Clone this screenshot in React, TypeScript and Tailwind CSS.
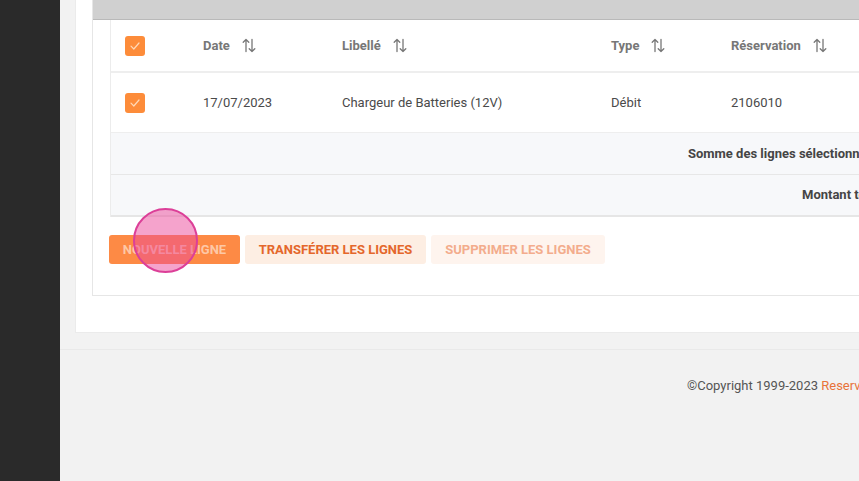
import React from 'react';

const SortIcon = () => (
  <svg width="14" height="15" viewBox="0 0 14 15" fill="none" stroke="#777" strokeWidth="1.3" strokeLinecap="round" strokeLinejoin="round" className="ml-[12px] shrink-0">
    <path d="M4 13.5V1.5M1.2 4.3L4 1.5L6.8 4.3" />
    <path d="M10 1.5V13.5M7.2 10.7L10 13.5L12.8 10.7" />
  </svg>
);

const Checkbox = () => (
  <div className="w-[20px] h-[20px] rounded-[3px] bg-[#fd8c3a] flex items-center justify-center">
    <svg width="10" height="8" viewBox="0 0 10 8" fill="none" stroke="#ffd9b8" strokeWidth="1.2" strokeLinecap="round" strokeLinejoin="round">
      <path d="M1 4.2L3.8 7L9 1" />
    </svg>
  </div>
);

const columns = [
  { label: 'Date', w: 'w-[139px]' },
  { label: 'Libellé', w: 'w-[269px]' },
  { label: 'Type', w: 'w-[120px]' },
  { label: 'Réservation', w: 'w-[200px]' },
];

const row = ['17/07/2023', 'Chargeur de Batteries (12V)', 'Débit', '2106010'];

export default function App() {
  return (
    <div className="flex h-[481px] w-full overflow-hidden bg-[#f2f2f2] text-[13px]" style={{ fontFamily: 'Roboto, "Liberation Sans", sans-serif' }}>
      <div className="w-[60px] shrink-0 bg-[#2a2a2a]" />
      <div className="relative flex-1 min-w-0 flex flex-col">
        {/* Card */}
        <div className="pl-[15px]">
          <div className="w-[1100px] bg-white border-l border-b border-[#ebebeb] pl-[16px] pb-[36px]">
            <div className="border-l border-b border-[#e6e6e6]">
              <div className="h-[20px] bg-[#d0d0d0] border-b border-[#b9b9b9]" />
              <div className="pl-[18px] pb-[31px]">
                {/* Table */}
                <div className="-ml-[1px] border-l border-[#ececec]">
                  <div className="h-[53px] flex items-center border-b-2 border-[#eeeeee]">
                    <div className="w-[77px] pl-[14px] shrink-0"><Checkbox /></div>
                    {columns.map((c) => (
                      <div key={c.label} className={`${c.w} shrink-0 pl-[15px] flex items-center font-bold text-[#777]`}>
                        <span>{c.label}</span>
                        <SortIcon />
                      </div>
                    ))}
                  </div>
                  <div className="h-[60px] flex items-center border-b border-[#eeeeee]">
                    <div className="w-[77px] pl-[14px] shrink-0"><Checkbox /></div>
                    {row.map((v, i) => (
                      <div key={v} className={`${columns[i].w} shrink-0 pl-[15px] text-[#4a4a4a]`}>{v}</div>
                    ))}
                  </div>
                  <div className="h-[42px] flex items-center bg-[#f7f8fa] border-b border-[#e7e7e7] pl-[577px] font-bold text-[#454545]">
                    Somme des lignes sélectionnées
                  </div>
                  <div className="h-[42px] flex items-center bg-[#f7f8fa] border-b-2 border-[#e6e6e6] pl-[691px] font-bold text-[#454545]">
                    Montant total
                  </div>
                </div>
                {/* Buttons */}
                <div className="mt-[18px] -ml-[2px] flex gap-[5px] text-[13px] font-bold">
                  <button className="h-[29px] w-[131px] rounded-[3px] bg-[#fd8a45] text-[#fdc8a6]">NOUVELLE LIGNE</button>
                  <button className="h-[29px] w-[181px] rounded-[3px] bg-[#fdeee3] text-[#e4672b]">TRANSFÉRER LES LIGNES</button>
                  <button className="h-[29px] w-[174px] rounded-[3px] bg-[#fef4ee] text-[#f3ac8c]">SUPPRIMER LES LIGNES</button>
                </div>
              </div>
            </div>
          </div>
        </div>
        {/* Footer */}
        <div className="mt-[16px] border-t border-[#e9e9e9] pt-[26px] pl-[627px] whitespace-nowrap text-[#555]">
          ©Copyright 1999-2023 <span className="text-[#e8733a]">Reservations Manager</span>
        </div>
        {/* Click marker */}
        <div className="absolute left-[73px] top-[208px] w-[65px] h-[65px] rounded-full border-2 border-[#dc3f98] bg-[rgba(236,72,153,0.5)]" />
      </div>
    </div>
  );
}
